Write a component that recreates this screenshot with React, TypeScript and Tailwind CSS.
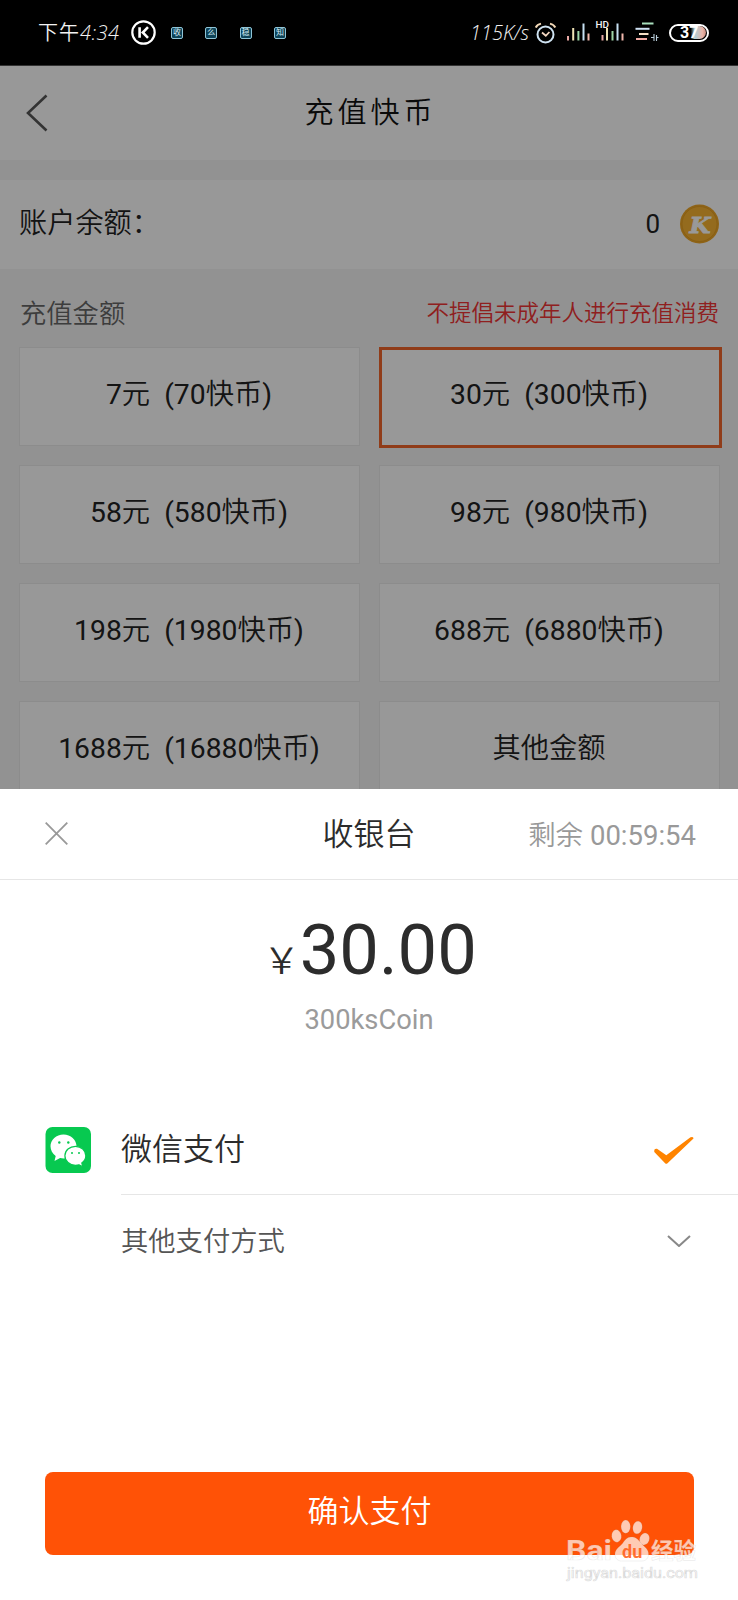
import React from "react";

const amounts = [
  "7元  (70快币)",
  "30元  (300快币)",
  "58元  (580快币)",
  "98元  (980快币)",
  "198元  (1980快币)",
  "688元  (6880快币)",
  "1688元  (16880快币)",
  "其他金额",
];

// Sets Latin runs in regular weight and Chinese runs in demi-light.
function Mixed({ text }: { text: string }) {
  return (
    <span className="whitespace-pre">
      {text.split(/([\u4e00-\u9fff]+)/).map((run, i) => (
        <span key={i} className={i % 2 ? "font-[350]" : "font-normal"}>
          {run}
        </span>
      ))}
    </span>
  );
}

function Notice({ label }: { label: string }) {
  return (
    <span className="flex h-3 w-3 items-center justify-center overflow-hidden rounded-[2px] border border-[#8fc4d6] bg-[#0d4257] text-[8px] leading-none text-[#d5edf5]">
      {label}
    </span>
  );
}

function StatusBar() {
  return (
    <div className="flex h-[65px] items-center bg-black text-[#f2f2f2]">
      <div className="ml-[38px] flex w-[83px] items-center leading-none">
        <span className="text-[20px] font-[350] tracking-[1px]">下午</span>
        <span className="font-['Open_Sans'] text-[20px] font-light italic tracking-[.5px]">4:34</span>
      </div>
      <svg className="ml-[10px] h-[25px] w-[25px] shrink-0" viewBox="0 0 25 25" fill="none" stroke="#fff">
        <circle cx="12.5" cy="12.5" r="11.2" strokeWidth="2.2" />
        <path d="M8.6 7.2v10.6M17 7.2l-5.2 5.3 5.2 5.3" strokeWidth="2.6" />
      </svg>
      <div className="ml-[15px] flex gap-[22.3px]">
        <Notice label="收" />
        <Notice label="么" />
        <Notice label="稳" />
        <Notice label="知" />
      </div>
      <div className="ml-auto mr-[29px] flex items-center">
        <span className="mr-[6px] font-['Open_Sans'] text-[20px] font-light italic leading-none">115K/s</span>
        <svg className="h-[24px] w-[134px]" viewBox="0 -1 134 24" fill="none">
          <circle cx="10.500" cy="12.500" r="8" stroke="#cfe3f2" strokeWidth="2" />
          <path d="M7 10.500l3.800 3.300 3.600-3.800" stroke="#f3d6c0" strokeWidth="1.800" />
          <path d="M.8 5.500Q2 2.600 6 1.600M15 1.600q4 1 5.300 3.900" stroke="#f3d9b8" strokeWidth="2" />
          <g strokeWidth="2">
            <path d="M33 14v4.500M67.500 13v5.500" stroke="#e9a9a5" />
            <path d="M38.200 6v12.500M72 6v12.500" stroke="#efe3b5" />
            <path d="M43.400 9v9.500M77.500 9v9.500" stroke="#9fd6a8" />
            <path d="M48.500 1.500v17M82.500 1.500v17" stroke="#c6e0f2" />
            <path d="M53.500 11.500v7M87.500 11.500v7" stroke="#f0b7ac" />
          </g>
          <text x="60.500" y="5.500" fontSize="9" fontFamily="Roboto" fontWeight="500" fill="#f2f2f2" textLength="13.500" lengthAdjust="spacingAndGlyphs">HD</text>
          <path d="M107 1.500h11.500" stroke="#a8dfbd" strokeWidth="2" />
          <path d="M100.500 6.800h14" stroke="#d0e2f5" strokeWidth="2" />
          <path d="M104 12h9.500" stroke="#f4dfc5" strokeWidth="2" />
          <path d="M101 17h11" stroke="#f0aaa3" strokeWidth="2" />
          <path d="M116 15.500h2.500M119 12v7M121.500 13v6M121.500 15.500h2" stroke="#b7cbd8" strokeWidth="1.100" />
        </svg>
        <div className="flex h-[18px] w-10 items-center justify-center rounded-full border-2 border-white bg-black">
          <span className="flex h-[13px] w-[34px] items-center rounded-full bg-[linear-gradient(90deg,#000_55%,#acd2dc_66%,#e9b3a6_90%,#c98d80_100%)] pl-[8px] pt-px font-['Roboto'] text-[16px] font-bold leading-none text-white">37</span>
        </div>
      </div>
    </div>
  );
}

function Coin() {
  return (
    <svg className="-mt-[2px] h-10 w-10" viewBox="0 0 40 40">
      <circle cx="19.500" cy="20" r="19.500" fill="#eda627" />
      <circle cx="19.500" cy="20" r="17.500" fill="#f7b233" stroke="#e09a1c" strokeWidth=".7" />
      <text x="20" y="28.500" textAnchor="middle" fontFamily="DejaVu Serif" fontWeight="700" fontStyle="italic" fontSize="22" fill="#fff" stroke="#fff" strokeWidth=".8" textLength="21" lengthAdjust="spacingAndGlyphs">K</text>
    </svg>
  );
}

function RechargePage() {
  return (
    <div className="relative h-[724px] overflow-hidden bg-[#f4f4f4] text-[#222]">
      <header className="flex h-[95px] items-center border-t border-[#555] bg-[#fefefe]">
        <svg className="ml-[25px] h-[38px] w-6" viewBox="0 0 24 38" fill="none" stroke="#555" strokeWidth="2.600">
          <path d="M21.500 1.500L3 19l18.500 17.500" />
        </svg>
        <h1 className="flex-1 pr-[46px] text-center text-[29px] font-[350] leading-none tracking-[4px] text-[#111]">充值快币</h1>
      </header>
      <section className="mt-5 flex h-[89px] items-center bg-[#fefefe] pl-[19px] pr-[18px] text-[28.200px]">
        <span className="font-[350]">账户余额：</span>
        <span className="-mt-px ml-auto mr-5 text-[26px]">0</span>
        <Coin />
      </section>
      <div className="flex h-[78px] items-start justify-between pl-5 pr-[19px] pt-[26px] font-[350] leading-[36px]">
        <span className="pt-px text-[26.300px] text-[#666]">充值金额</span>
        <span className="text-[22.500px] text-[#ef3535]">不提倡未成年人进行充值消费</span>
      </div>
      <div className="grid grid-cols-2 gap-x-[19px] gap-y-[19px] pl-[19px] pr-[18px]">
        {amounts.map((a, i) => (
          <button
            key={a}
            className={
              i === 1
                ? "-mr-[2px] -mb-[2px] h-[101px] border-[3px] border-[#f0642a] bg-[#fefefe] pb-[4px] pr-[3px] text-[28.300px]"
                : "h-[99px] border border-[#e9e9e9] bg-[#fefefe] pb-[2px] pr-px text-[28.300px]"
            }
          >
            <Mixed text={a} />
          </button>
        ))}
      </div>
      <div className="absolute inset-0 bg-black/40" />
    </div>
  );
}

function WechatIcon() {
  return (
    <svg className="h-[46px] w-[46px]" viewBox="0 0 46 46">
      <rect x=".500" width="45.500" height="46" rx="7" fill="#07c950" />
      <path d="M18.500 7.500C11.300 7.500 5.500 12.700 5.500 19.300c0 4 2 7.300 5.200 9.600l-1.200 5.100 5.600-3c1.200.3 2.300.4 3.600.4 7 0 12.800-5.200 12.800-12S25.700 7.500 18.500 7.500z" fill="#fff" />
      <path d="M30.500 19.300c-5.900 0-10.600 4.200-10.600 9.500s4.700 9.500 10.600 9.500c1.300 0 2.500-.2 3.600-.5l3.600 1.900-.9-3.700c2.500-1.800 4-4.200 4-7.200 0-5.300-4.600-9.500-10.300-9.500z" fill="#fff" stroke="#07c950" strokeWidth="1.200" />
      <g fill="#07c950">
        <circle cx="14.300" cy="15.500" r="1.200" />
        <circle cx="23.300" cy="15.500" r="1.200" />
        <circle cx="27" cy="26" r="1" />
        <circle cx="34" cy="26" r="1" />
      </g>
    </svg>
  );
}

function Watermark() {
  return (
    <svg className="absolute left-[562px] top-[729px] h-[70px] w-[140px]" viewBox="0 0 140 70">
      <g fill="#fff" fillOpacity=".7" stroke="#999" strokeOpacity=".2" strokeWidth=".7" fontFamily="Roboto, 'Noto Sans CJK SC', sans-serif" fontWeight="700">
        <text x="4" y="42" fontSize="28" textLength="46" lengthAdjust="spacingAndGlyphs">Bai</text>
        <ellipse cx="54.500" cy="18" rx="4.800" ry="6.200" transform="rotate(-8 54.500 18)" />
        <ellipse cx="63.700" cy="8.700" rx="4.600" ry="6.600" />
        <ellipse cx="75.500" cy="9.500" rx="4.600" ry="6.400" transform="rotate(10 75.500 9.500)" />
        <ellipse cx="82.500" cy="21" rx="4.800" ry="6" transform="rotate(18 82.500 21)" />
        <path fillRule="evenodd" d="M69 19c-4 0-6 3-8.500 6.500C57.500 29 53 31 53 36.500c0 4 3 6.500 6.500 6.500H80c4 0 6.500-3 6.500-7 0-5.500-5-7.500-8-11.500C76 21 73.500 19 69 19z" />
        <text x="60" y="40" fontSize="18" fill="#ff5a12" fillOpacity=".85" stroke="none">du</text>
        <text x="89" y="41" fontSize="22.500">经验</text>
        <text x="5" y="60" fontSize="14" fontWeight="400" strokeOpacity=".35" textLength="131" lengthAdjust="spacingAndGlyphs">jingyan.baidu.com</text>
      </g>
    </svg>
  );
}

function Cashier() {
  return (
    <section className="relative h-[811px] bg-white text-[#2c2c2c]">
      <header className="grid h-[91px] grid-cols-3 items-center border-b border-[#e6e6e6] pl-[45px] pr-[42px]">
        <svg className="-mt-px h-[23px] w-[23px]" viewBox="0 0 23 23" fill="none" stroke="#999" strokeWidth="1.800">
          <path d="M.7.7l21.600 21.600M22.300.7L.7 22.300" />
        </svg>
        <h2 className="-ml-[3px] pt-px text-center text-[31px] font-[350] leading-none">收银台</h2>
        <span className="-ml-4 whitespace-nowrap pt-[4px] text-right text-[27.500px] leading-none text-[#999]">
          <Mixed text="剩余 00:59:54" />
        </span>
      </header>
      <div className="flex items-baseline justify-center pl-[2px] pt-[26px] leading-[88px]">
        <span className="text-[36.600px] font-[350]">￥</span>
        <span className="text-[70.500px]">30.00</span>
      </div>
      <p className="-mt-[4px] text-center text-[27.300px] leading-[36px] text-[#9b9b9b]">300ksCoin</p>
      <div className="ml-[45px] mt-[67px] flex h-[90px] items-center">
        <WechatIcon />
        <div className="ml-[30px] flex h-full flex-1 items-center justify-between border-b border-[#e6e6e6] pr-[44px]">
          <span className="pt-px text-[31px] font-[350]">微信支付</span>
          <svg className="h-[30px] w-[41px]" viewBox="0 0 41 30" fill="#ff8400">
            <path d="M4 13.700L13.300 20.300 37.500 2.300q3-1.200 3 1.200L14.500 28.300q-1.200 1-2.400 0L1.300 17q-.6-3.800 2.700-3.300z" />
          </svg>
        </div>
      </div>
      <div className="ml-[121px] mr-[47px] flex h-[92px] items-center justify-between text-[27.300px] font-[350] text-[#555]">
        <span className="pt-[3px]">其他支付方式</span>
        <svg className="h-3 w-6" viewBox="0 0 24 12" fill="none" stroke="#888" strokeWidth="2">
          <path d="M1 1l11 10L23 1" />
        </svg>
      </div>
      <button className="ml-[45px] mt-[185px] block h-[83px] w-[649px] rounded-lg bg-[#ff5206] pb-[2px] text-[31px] font-[350] text-white">确认支付</button>
      <Watermark />
    </section>
  );
}

export default function App() {
  return (
    <main className="h-[1600px] w-[738px] overflow-hidden bg-white font-[Roboto,'Noto_Sans_CJK_SC',sans-serif]">
      <StatusBar />
      <RechargePage />
      <Cashier />
    </main>
  );
}
